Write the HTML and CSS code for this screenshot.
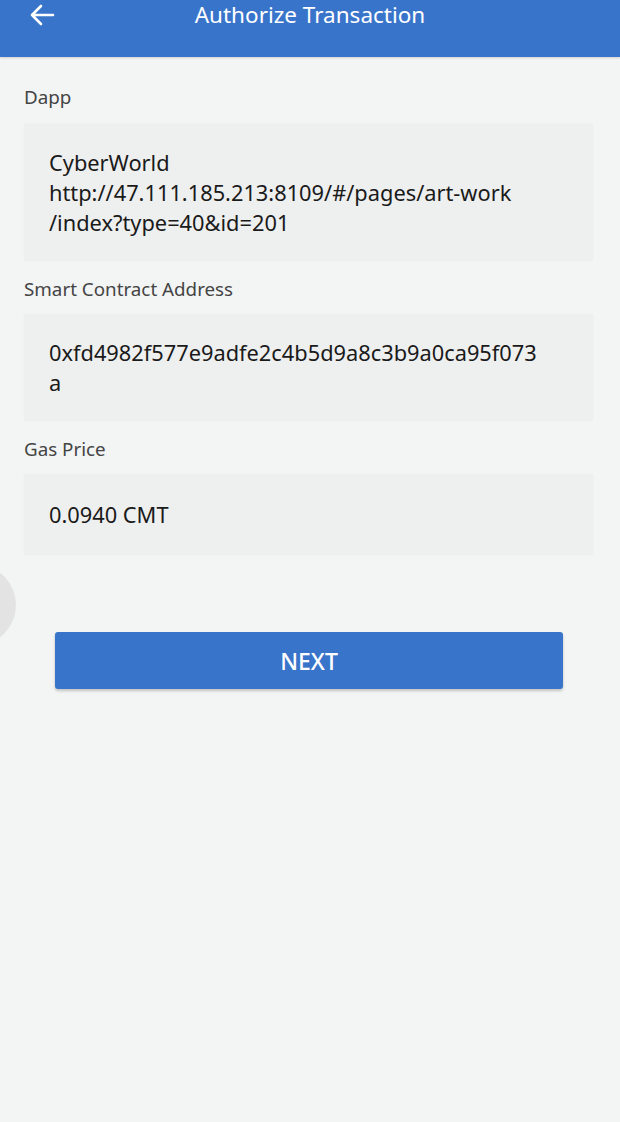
FILE: index.html
```html
<!DOCTYPE html>
<html>
<head>
<meta charset="utf-8">
<link rel="stylesheet" href="styles.css">
</head>
<body>
<header class="topbar">
  <span class="back">
    <svg width="26" height="22" viewBox="0 0 26 22"><path d="M24 11H3M12 2L3 11l9 9" fill="none" stroke="#fff" stroke-width="2.6" stroke-linecap="round" stroke-linejoin="round"/></svg>
  </span>
  <h1 class="title">Authorize Transaction</h1>
</header>
<main class="content">
  <div class="label label-first">Dapp</div>
  <div class="field">CyberWorld<br>http://47.111.185.213:8109/#/pages/art-work<br>/index?type=40&amp;id=201</div>
  <div class="label">Smart Contract Address</div>
  <div class="field">0xfd4982f577e9adfe2c4b5d9a8c3b9a0ca95f073<br>a</div>
  <div class="label">Gas Price</div>
  <div class="field field-single">0.0940 CMT</div>
  <div class="actions">
    <button class="next">NEXT</button>
  </div>
</main>
<div class="float-ball"></div>
</body>
</html>
```

FILE: styles.css
```css
html, body {
  margin: 0;
  padding: 0;
}
body {
  background: #f3f4f4;
  font-family: "Noto Sans", "Open Sans", sans-serif;
  width: 620px;
  height: 1122px;
  overflow: hidden;
  position: relative;
}
.topbar {
  height: 57px;
  background: #3974cb;
  box-shadow: 0 1px 2px rgba(0,0,0,0.15);
  display: flex;
  justify-content: center;
  position: relative;
}
.back {
  position: absolute;
  left: 29px;
  top: 4px;
  display: flex;
}
.title {
  margin: 0;
  color: #fff;
  font-weight: 400;
  font-size: 22.5px;
  line-height: 30px;
}
.content {
  padding: 28px 27px 0 24px;
  display: flex;
  flex-direction: column;
}
.label {
  font-size: 18.8px;
  line-height: 24px;
  color: #444;
  margin-bottom: 13px;
}
.label-first {
  margin-bottom: 15px;
}
.field {
  background: #eeefef;
  padding: 23.5px 25px;
  font-size: 21.8px;
  line-height: 30px;
  color: #1a1a1a;
  margin-bottom: 16px;
  box-shadow: 0 0 2px rgba(0,0,0,0.03);
}
.field-single {
  padding: 26px 25px 25px;
}
.actions {
  display: flex;
  padding: 61px 30px 0 31px;
}
.next {
  flex: 1;
  height: 57px;
  background: #3974cb;
  color: #fff;
  border: none;
  border-radius: 3px;
  font-family: "Noto Sans", "Open Sans", sans-serif;
  font-size: 23px;
  font-weight: 500;
  box-shadow: 0 2px 3px rgba(0,0,0,0.2);
}
.float-ball {
  position: absolute;
  left: -62px;
  top: 565px;
  width: 78px;
  height: 80px;
  border-radius: 50%;
  background: #e3e3e3;
}
```
